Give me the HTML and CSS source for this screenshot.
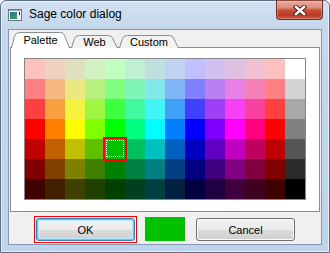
FILE: index.html
```html
<!DOCTYPE html>
<html>
<head>
<meta charset="utf-8">
<title>Sage color dialog</title>
<link rel="stylesheet" href="styles.css">
</head>
<body>
<div class="window">
  <div class="titlebar">
    <svg class="app-icon" width="14" height="12" viewBox="0 0 14 12">
      <defs>
        <linearGradient id="ig" x1="0" y1="0" x2="1" y2="1">
          <stop offset="0" stop-color="#2b6f9e"/>
          <stop offset="1" stop-color="#3fa06a"/>
        </linearGradient>
      </defs>
      <rect x="0.5" y="0.5" width="13" height="11" fill="#f4f6f8" stroke="#6f7780"/>
      <rect x="1" y="1" width="12" height="1" fill="#9aa6b2"/>
      <rect x="2" y="3" width="7" height="7" fill="url(#ig)"/>
      <rect x="11" y="3" width="1" height="3" fill="#1a1a1a"/>
    </svg>
    <span class="title">Sage color dialog</span>
    <div class="close">
      <svg width="14" height="11" viewBox="0 0 14 11">
        <path d="M3 2 L11 9 M11 2 L3 9" stroke="#4a2a26" stroke-width="4.4" stroke-linecap="square"/>
        <path d="M3 2 L11 9 M11 2 L3 9" stroke="#ffffff" stroke-width="2.4" stroke-linecap="square"/>
      </svg>
    </div>
  </div>
  <div class="client">
    <div class="tabs">
      <div class="tab active tab-palette">
        <svg class="tab-shape" width="59" height="16" viewBox="0 0 59 16">
          <path d="M0.5 16 L3.5 4.5 Q4.5 0.5 8.5 0.5 L49.5 0.5 Q52.5 0.5 53.5 3.5 L58.5 16" fill="#ffffff" stroke="#898c95"/>
        </svg>
        <span class="tab-label">Palette</span>
      </div>
      <div class="tab tab-web">
        <svg class="tab-shape" width="47" height="13" viewBox="0 0 47 13">
          <path d="M0.5 13 L3.5 3.5 Q4.5 0.5 8.5 0.5 L37.5 0.5 Q40.5 0.5 41.5 3 L46.5 13" fill="#f2f2f2" stroke="#898c95"/>
        </svg>
        <span class="tab-label">Web</span>
      </div>
      <div class="tab tab-custom">
        <svg class="tab-shape" width="60" height="13" viewBox="0 0 60 13">
          <path d="M0.5 13 L3.5 3.5 Q4.5 0.5 8.5 0.5 L50.5 0.5 Q53.5 0.5 54.5 3 L59.5 13" fill="#f2f2f2" stroke="#898c95"/>
        </svg>
        <span class="tab-label">Custom</span>
      </div>
    </div>
    <div class="panel">
      <div class="grid">
        <div class="cell" style="background:#ffc0c0"></div><div class="cell" style="background:#f0d0c0"></div><div class="cell" style="background:#e0e0c0"></div><div class="cell" style="background:#d2f0c0"></div><div class="cell" style="background:#c0ffc0"></div><div class="cell" style="background:#c0f0d2"></div><div class="cell" style="background:#c0e0e0"></div><div class="cell" style="background:#c0d2f0"></div><div class="cell" style="background:#c0c0ff"></div><div class="cell" style="background:#d2c0f0"></div><div class="cell" style="background:#e0c0e0"></div><div class="cell" style="background:#f0c0d2"></div><div class="cell" style="background:#ffc0c0"></div><div class="cell" style="background:#ffffff"></div>
        <div class="cell" style="background:#ff8080"></div><div class="cell" style="background:#f5b880"></div><div class="cell" style="background:#ebe882"></div><div class="cell" style="background:#b8f080"></div><div class="cell" style="background:#80ff80"></div><div class="cell" style="background:#80f5b8"></div><div class="cell" style="background:#80e8e8"></div><div class="cell" style="background:#80b6f5"></div><div class="cell" style="background:#8080ff"></div><div class="cell" style="background:#b880f0"></div><div class="cell" style="background:#e880e8"></div><div class="cell" style="background:#f480b8"></div><div class="cell" style="background:#ff8080"></div><div class="cell" style="background:#d4d4d4"></div>
        <div class="cell" style="background:#ff4040"></div><div class="cell" style="background:#fa9f40"></div><div class="cell" style="background:#f5f240"></div><div class="cell" style="background:#a0f540"></div><div class="cell" style="background:#40ff40"></div><div class="cell" style="background:#40faa0"></div><div class="cell" style="background:#40f5f5"></div><div class="cell" style="background:#40a0f8"></div><div class="cell" style="background:#4040ff"></div><div class="cell" style="background:#a040f5"></div><div class="cell" style="background:#f540f5"></div><div class="cell" style="background:#fa40a0"></div><div class="cell" style="background:#ff4040"></div><div class="cell" style="background:#a8a8a8"></div>
        <div class="cell" style="background:#ff0000"></div><div class="cell" style="background:#ff8000"></div><div class="cell" style="background:#ffff00"></div><div class="cell" style="background:#80ff00"></div><div class="cell" style="background:#00ff00"></div><div class="cell" style="background:#00ff80"></div><div class="cell" style="background:#00ffff"></div><div class="cell" style="background:#0080ff"></div><div class="cell" style="background:#0000ff"></div><div class="cell" style="background:#8000ff"></div><div class="cell" style="background:#ff00ff"></div><div class="cell" style="background:#ff0080"></div><div class="cell" style="background:#ff0000"></div><div class="cell" style="background:#808080"></div>
        <div class="cell" style="background:#c00000"></div><div class="cell" style="background:#c06000"></div><div class="cell" style="background:#c0c000"></div><div class="cell" style="background:#60c000"></div><div class="cell selected" style="background:#00c000"></div><div class="cell" style="background:#00c060"></div><div class="cell" style="background:#00c0c0"></div><div class="cell" style="background:#0060c0"></div><div class="cell" style="background:#0000c0"></div><div class="cell" style="background:#6000c0"></div><div class="cell" style="background:#c000c0"></div><div class="cell" style="background:#c00060"></div><div class="cell" style="background:#c00000"></div><div class="cell" style="background:#555555"></div>
        <div class="cell" style="background:#800000"></div><div class="cell" style="background:#804000"></div><div class="cell" style="background:#808000"></div><div class="cell" style="background:#408000"></div><div class="cell" style="background:#008000"></div><div class="cell" style="background:#008040"></div><div class="cell" style="background:#008080"></div><div class="cell" style="background:#004080"></div><div class="cell" style="background:#000080"></div><div class="cell" style="background:#400080"></div><div class="cell" style="background:#800080"></div><div class="cell" style="background:#800040"></div><div class="cell" style="background:#800000"></div><div class="cell" style="background:#2b2b2b"></div>
        <div class="cell" style="background:#400000"></div><div class="cell" style="background:#402000"></div><div class="cell" style="background:#404000"></div><div class="cell" style="background:#204000"></div><div class="cell" style="background:#004000"></div><div class="cell" style="background:#004020"></div><div class="cell" style="background:#004040"></div><div class="cell" style="background:#002040"></div><div class="cell" style="background:#000040"></div><div class="cell" style="background:#200040"></div><div class="cell" style="background:#400040"></div><div class="cell" style="background:#400020"></div><div class="cell" style="background:#400000"></div><div class="cell" style="background:#000000"></div>
      </div>
    </div>
    <div class="buttons">
      <div class="focus-ring"><button class="btn btn-default">OK</button></div>
      <div class="swatch"></div>
      <button class="btn btn-cancel">Cancel</button>
    </div>
  </div>
</div>
</body>
</html>
```

FILE: styles.css
```css
html, body {
  margin: 0;
  padding: 0;
}

body {
  background: #ffffff;
  width: 330px;
  height: 253px;
  overflow: hidden;
  font-family: "Liberation Sans", Arial, sans-serif;
  font-size: 12px;
  color: #000;
}

.window {
  box-sizing: border-box;
  width: 330px;
  height: 253px;
  border: 1px solid #5d6f85;
  border-radius: 6px 6px 0 0;
  background: linear-gradient(180deg, #d3e2f2 0px, #c4d7ec 28px, #bfd3ea 100%);
  box-shadow: inset 0 0 0 1px rgba(255, 255, 255, 0.55);
  padding: 0 7px 7px;
  display: flex;
  flex-direction: column;
}

/* ---------- title bar ---------- */
.titlebar {
  height: 28px;
  flex: none;
  display: flex;
  align-items: flex-start;
}

.app-icon {
  flex: none;
  margin-top: 8px;
  display: block;
}

.title {
  margin-left: 7px;
  margin-top: 6px;
  line-height: 14px;
  font-size: 12px;
  color: #000;
  white-space: nowrap;
}

.close {
  flex: none;
  margin-left: auto;
  margin-top: -1px;
  margin-right: -1px;
  box-sizing: border-box;
  width: 47px;
  height: 20px;
  border: 1px solid #6a2e26;
  border-top-color: #8a4a40;
  border-radius: 0 0 4px 4px;
  background: linear-gradient(180deg, #e8aa9c 0%, #dc8c7c 38%, #c9503a 50%, #b93a24 78%, #c85840 100%);
  box-shadow: inset 0 0 0 1px rgba(255, 210, 200, 0.35);
  display: flex;
  align-items: center;
  justify-content: center;
}

.close svg {
  display: block;
}

/* ---------- client area ---------- */
.client {
  flex: 1;
  border: 1px solid #8498b0;
  background: #f0f0f0;
  padding: 2px 1px 1px;
  display: flex;
  flex-direction: column;
}

.tabs {
  flex: none;
  height: 16px;
  margin-left: 1px;
  margin-bottom: -1px;
  display: flex;
  align-items: flex-end;
  position: relative;
  z-index: 1;
}

.tab {
  position: relative;
  flex: none;
  height: 13px;
  margin-right: 1px;
  text-align: center;
}

.tab.active {
  height: 16px;
}

.tab-palette { width: 59px; }
.tab-web { width: 47px; }
.tab-custom { width: 60px; }

.tab-shape {
  position: absolute;
  left: 0;
  top: 0;
  display: block;
}

.tab-label {
  position: relative;
  display: block;
  line-height: 14px;
  font-size: 11px;
  padding-top: 0;
  white-space: nowrap;
}

.tab.active .tab-label {
  padding-top: 1px;
}

.panel {
  flex: none;
  border: 1px solid #898c95;
  background: #ffffff;
  padding: 10px 13px 11px;
}

.grid {
  display: grid;
  grid-template-columns: repeat(14, 20px);
  grid-auto-rows: 20px;
  border: 1px solid #858585;
  width: max-content;
}

.cell {
  width: 20px;
  height: 20px;
}

.cell.selected {
  position: relative;
  z-index: 1;
  outline: 2px solid #ff0000;
}

.cell.selected::after {
  content: "";
  position: absolute;
  left: 1px;
  top: 1px;
  right: 1px;
  bottom: 2px;
  border: 1px dotted #ffffff;
}

/* ---------- buttons ---------- */
.buttons {
  flex: none;
  display: flex;
  align-items: flex-start;
  margin-top: 4px;
  padding-left: 24px;
  height: 27px;
}

.focus-ring {
  border: 1px solid #ff0000;
  padding: 1px;
}

.btn {
  box-sizing: border-box;
  display: block;
  width: 99px;
  height: 23px;
  margin: 0;
  padding: 0;
  border: 1px solid #707070;
  border-radius: 3px;
  background: linear-gradient(180deg, #f2f2f2 0%, #ebebeb 50%, #dddddd 50%, #cfcfcf 100%);
  box-shadow: inset 0 0 0 1px #fcfcfc;
  font-family: "Liberation Sans", Arial, sans-serif;
  font-size: 11px;
  color: #000;
  line-height: 14px;
}

.btn-default {
  border-color: #3c7fb1;
  box-shadow: inset 0 0 0 1px #5ccbf2, inset 0 0 0 2px #b5e8fa;
}

.swatch {
  flex: none;
  width: 40px;
  height: 24px;
  margin-left: 8px;
  margin-top: 1px;
  background: #00c000;
}

.btn-cancel {
  margin-left: 11px;
  margin-top: 2px;
}
```
